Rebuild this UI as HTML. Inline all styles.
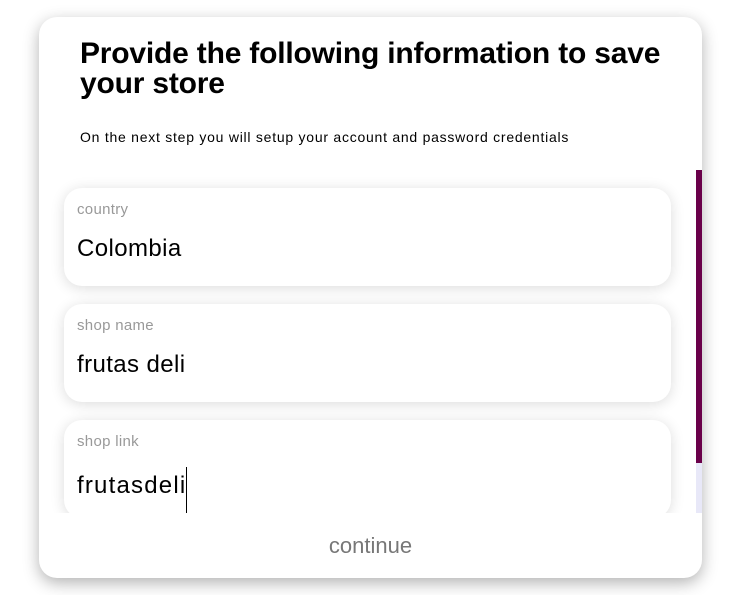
<!DOCTYPE html>
<html><head><style>
body{margin:0;width:754px;height:595px;background:#fff;font-family:"Liberation Sans",sans-serif;overflow:hidden;position:relative}
.card{position:absolute;left:39px;top:17px;width:663px;height:561px;background:#fff;border-radius:18px;box-shadow:0 5px 16px rgba(0,0,0,.3);overflow:hidden}
h1{position:absolute;left:41px;top:22px;margin:0;font-size:30px;line-height:30px;font-weight:bold;color:#000;letter-spacing:-0.2px;width:620px}
.sub{position:absolute;left:41px;top:112px;font-size:14px;color:#000;letter-spacing:0.75px}
.scroll{position:absolute;left:0;top:153px;width:663px;height:343px;overflow:hidden}
.bar{position:absolute;left:657px;top:0;width:6px;height:343px;background:#e8e8f8}
.thumb{position:absolute;left:657px;top:0;width:6px;height:293px;background:#6a004a}
.f{position:absolute;left:25px;width:607px;height:98px;background:#fff;border-radius:18px;box-shadow:0 2px 14px rgba(0,0,0,.14)}
.l{position:absolute;left:13px;top:13px;font-size:15px;color:#999;letter-spacing:0.3px}
.v{position:absolute;left:13px;top:47px;font-size:24px;color:#000;letter-spacing:0.4px}
.cont{position:absolute;left:0;width:663px;top:516px;text-align:center;font-size:22px;color:#777}
</style></head><body>
<div class="card">
<h1>Provide the following information to save your store</h1>
<div class="sub">On the next step you will setup your account and password credentials</div>
<div class="scroll">
<div class="f" style="top:18px"><div class="l">country</div><div class="v">Colombia</div></div>
<div class="f" style="top:134px"><div class="l">shop name</div><div class="v">frutas deli</div></div>
<div class="f" style="top:250px"><div class="l">shop link</div><div class="v" style="letter-spacing:1.2px">frutasdeli<span style="display:inline-block;width:1px;height:54px;background:#000;vertical-align:-28px;margin-left:0"></span></div></div>
<div class="bar"></div><div class="thumb"></div>
</div>
<div class="cont">continue</div>
</div>
</body></html>
